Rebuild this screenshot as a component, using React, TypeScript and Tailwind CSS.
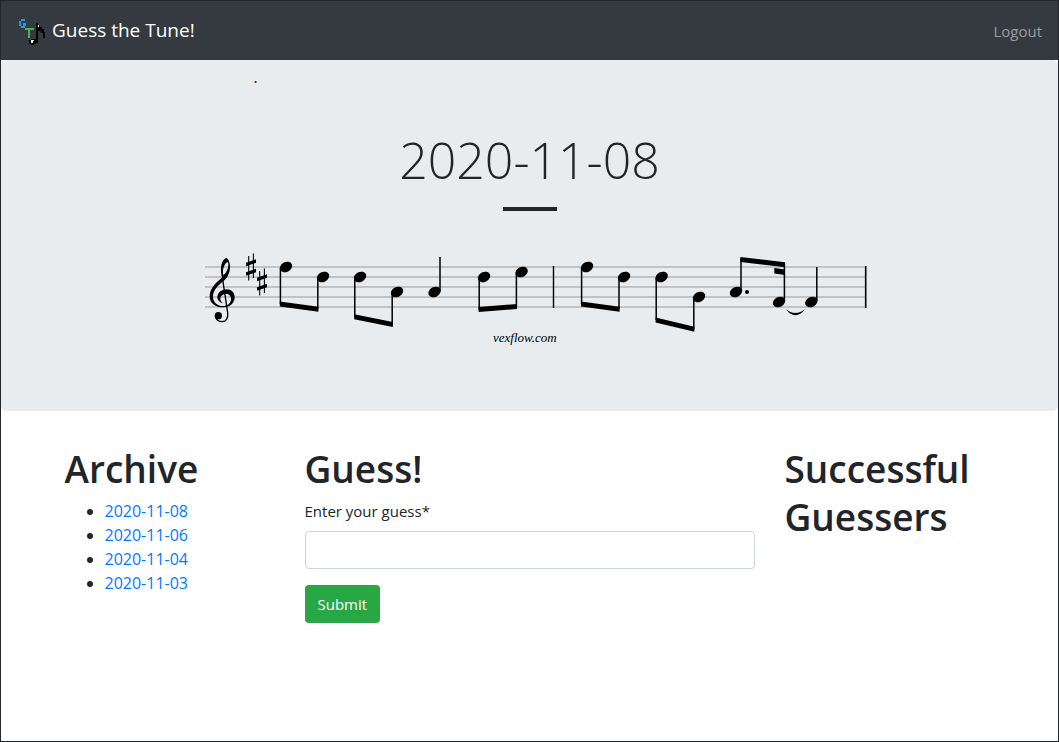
type Point = [number, number];

const archive = ['2020-11-08', '2020-11-06', '2020-11-04', '2020-11-03'];

const staveLines = [267, 277, 287, 297, 307];

const noteHeads: Point[] = [
  [286, 267], [323, 277], [360, 277], [397, 292], [434.5, 292], [484, 277], [521.6, 272],
  [587, 267], [624, 277], [661.6, 277], [699, 297], [736, 292], [779, 302], [811.3, 302],
];

/* x, top, bottom of every stem */
const stems: [number, number, number][] = [
  [280.4, 268, 304], [317.8, 278, 309], [354.8, 278, 317], [392.2, 293, 325],
  [440, 257, 291], [479.2, 278, 310], [516.4, 273, 307], [581.6, 268, 304],
  [619, 278, 309], [656.2, 278, 320], [693.8, 298, 329], [741, 258, 291],
  [784.4, 264, 301], [816.8, 267, 301],
];

const beams = [
  '279.8,301.5 318.4,306.7 318.4,311.7 279.8,306.5',
  '354.2,314.3 392.8,322 392.8,327 354.2,319.3',
  '478.6,307 517,304 517,309 478.6,312',
  '581,301.5 619.6,306.7 619.6,311.7 581,306.5',
  '655.6,317.5 694.4,326.7 694.4,331.7 655.6,322.5',
  '740.4,257 785,262.3 785,267.3 740.4,262',
  '774.3,268 785,269.6 785,275 774.3,273.4',
];

const sharps: Point[] = [[251, 267], [262, 282]];

function Logo() {
  return (
    <svg className="h-[31px] w-[30px] shrink-0" viewBox="0 -1 30 31" shapeRendering="crispEdges" aria-hidden="true">
      <g transform="translate(-3 -3) scale(0.33333)">
        <path fill="#2196f3" d="M21 21h12v6H21zM15 27h6v15h-6zM27 33h9v9h-9zM21 42h12v6H21z" />
        <path fill="#4caf50" d="M33 48h27v6H48v24h-6V54h-9z" />
        <path fill="#000" d="M66 33h6v6h6v6h6v6h6v9h3v18h-6V63h-6v-6h-9v36h-6v3h-6v3H51v-3h-6V84h6v-3h15z" />
        <path fill="#fff" d="M51 84h9v3h-3v6h-6zM72 39h3v6h-3z" />
      </g>
    </svg>
  );
}

function TrebleClef() {
  return (
    <g transform="translate(202 250) scale(0.33333)">
      <path
        fillRule="evenodd"
        d="M72 24C60 30 52 50 60 83C36 102 23 118 23 140C23 160 42 172 62 172C84 172 98 160 98 142C98 128 88 118 74 118C58 118 46 129 46 142C46 151 54 158 63 160C57 155 55 150 55 146C55 138 63 132 73 132C83 132 88 140 87 150C85 161 76 168 62 168C46 168 33 156 33 140C33 122 46 108 64 94C78 82 84 66 84 50C84 38 79 24 72 24ZM76 37C68 40 60 58 64 76C73 69 79 56 79 46C79 40 79 38 76 37Z"
      />
      <path d="M61 82L77 188C79 206 72 215 60 215C50 215 44 210 41 202" fill="none" stroke="#000" strokeWidth="4" />
      <circle cx="49" cy="197" r="11" />
    </g>
  );
}

function Score() {
  return (
    <svg className="mx-auto block w-[679px] max-w-full" viewBox="190 245 679 105" role="img" aria-label="Tune in D major">
      {staveLines.map((y) => (
        <path key={y} d={`M205 ${y}H866`} stroke="#999" strokeWidth="1" />
      ))}
      <TrebleClef />
      {sharps.map(([x, y]) => (
        <g key={x} transform={`translate(${x} ${y})`}>
          <path d="M-2.3 -11V13.5M2.4 -13.5V11" stroke="#000" strokeWidth="1.1" />
          <path d="M-5 -4.3L5 -7.8V-4.2L-5 -0.7zM-5 5.2L5 1.7V5.3L-5 8.8z" />
        </g>
      ))}
      {noteHeads.map(([x, y]) => (
        <ellipse key={x} rx="6.5" ry="4.9" transform={`translate(${x} ${y}) rotate(-26)`} />
      ))}
      {stems.map(([x, top, bottom]) => (
        <path key={x} d={`M${x} ${top}V${bottom}`} stroke="#000" strokeWidth="1.5" />
      ))}
      {beams.map((points) => (
        <polygon key={points} points={points} />
      ))}
      <circle cx="747" cy="292" r="2" />
      <path d="M785.6 309Q795.5 317 805.2 309Q795.5 321.4 785.6 309z" />
      <path d="M553.5 266V308" stroke="#000" strokeWidth="1.4" />
      <path d="M865.7 266V308" stroke="#000" strokeWidth="1.6" />
      <text x="493" y="342" className="font-['Liberation_Serif',serif] text-[13px] italic">
        vexflow.com
      </text>
    </svg>
  );
}

function Heading({ children }: { children: string }) {
  return <h2 className="mb-1.5 pt-0.5 text-[37px] leading-[48px] font-semibold">{children}</h2>;
}

export default function App() {
  return (
    <div className="min-h-screen border border-[#23272b] bg-white font-['Open_Sans',sans-serif] text-[15px] leading-6 text-[#212529]">
      <nav className="flex h-[59px] items-center justify-between bg-[#343a40] px-4">
        <a href="#" className="flex items-center gap-[5px] pb-0.5 text-[19px] text-white">
          <Logo />
          Guess the Tune!
        </a>
        <a href="#" className="text-[#999c9f]">Logout</a>
      </nav>

      <header className="rounded-[5px] bg-[#e8ecef] pb-[61px] text-center">
        <p className="mx-auto h-16 w-[660px] max-w-full pt-1.5 pl-[54px] text-left font-['Liberation_Serif',serif] text-base">
          .
        </p>
        <h1 className="pt-0.5 text-[50px] leading-[68px] font-light">2020-11-08</h1>
        <hr className="mx-auto mt-[13px] mb-[34px] h-1 w-[54px] border-0 bg-[#212529]" />
        <Score />
      </header>

      <main className="mx-auto mt-8 grid max-w-[960px] grid-cols-4">
        <section className="px-[15px]">
          <Heading>Archive</Heading>
          <ul className="list-disc pl-10 text-base">
            {archive.map((date) => (
              <li key={date}>
                <a href="#" className="text-[#007bff]">{date}</a>
              </li>
            ))}
          </ul>
        </section>

        <section className="col-span-2 px-[15px]">
          <Heading>Guess!</Heading>
          <form onSubmit={(event) => event.preventDefault()}>
            <label htmlFor="guess" className="mb-2 block">Enter your guess*</label>
            <input id="guess" type="text" className="mb-4 block h-[38px] w-full rounded border border-[#ced4da] bg-white px-3" />
            <button type="submit" className="h-[38px] rounded bg-[#28a745] px-[13px] text-white">Submit</button>
          </form>
        </section>

        <section className="px-[15px]">
          <Heading>Successful Guessers</Heading>
        </section>
      </main>
    </div>
  );
}
